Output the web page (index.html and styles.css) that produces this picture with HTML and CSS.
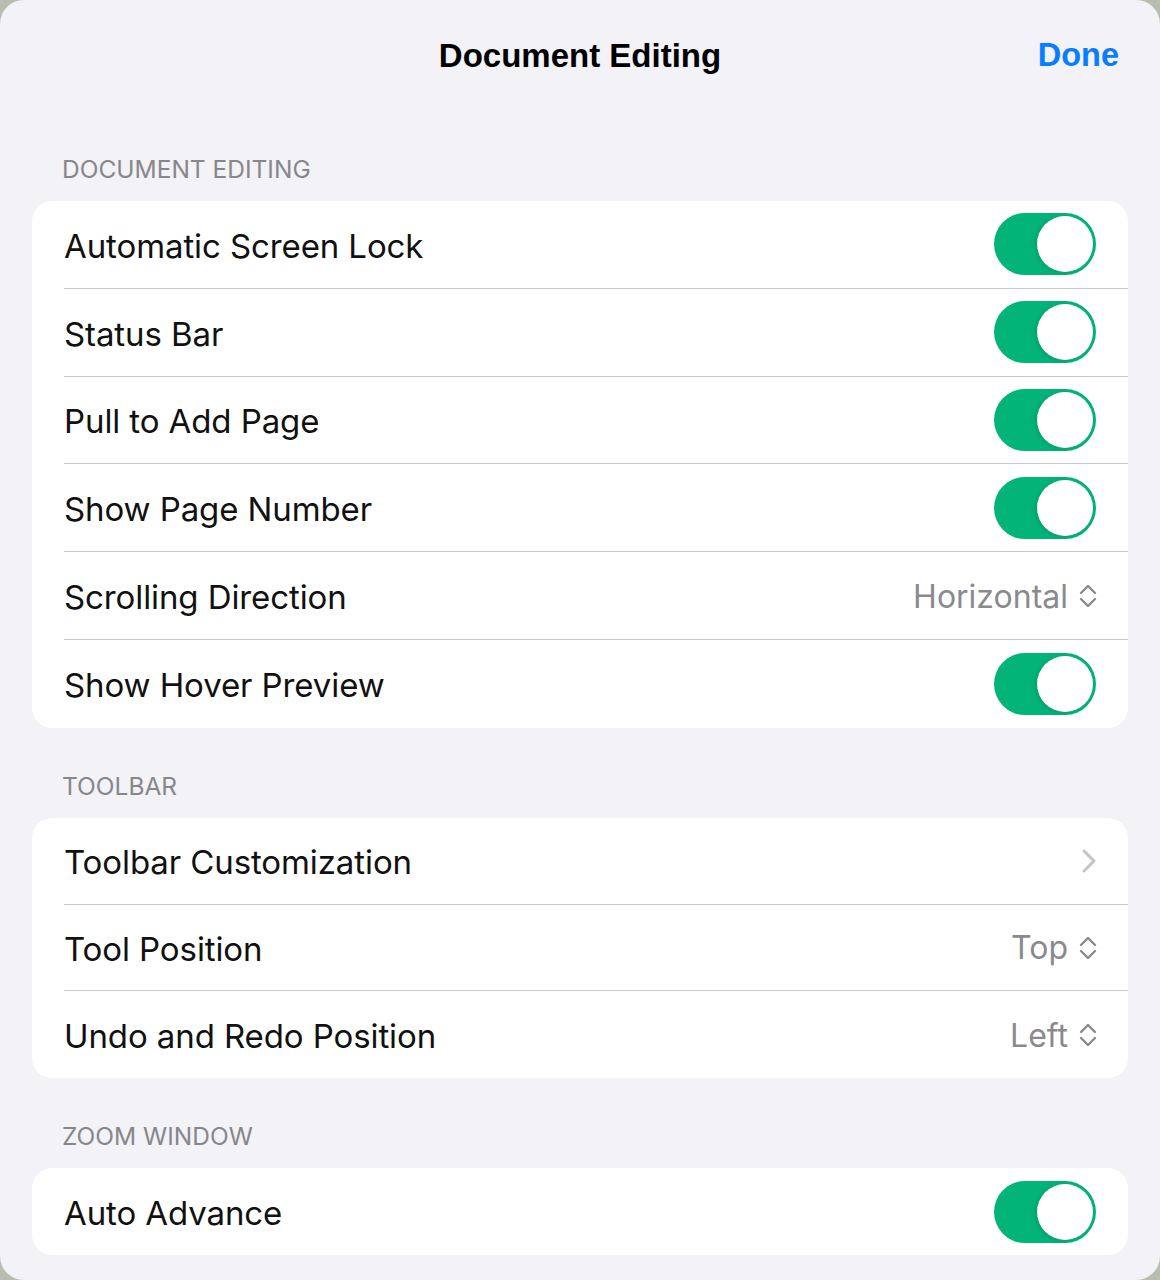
FILE: index.html
```html
<!DOCTYPE html>
<html lang="en">
<head>
<meta charset="utf-8">
<title>Document Editing</title>
<link rel="stylesheet" href="styles.css">
</head>
<body>
<div class="sheet">
  <header class="nav">
    <div class="nav-title">Document Editing</div>
    <div class="nav-done">Done</div>
  </header>

  <div class="section-title first">DOCUMENT EDITING</div>
  <div class="card">
    <div class="row"><span class="label">Automatic Screen Lock</span><span class="toggle"><span class="knob"></span></span></div>
    <div class="row"><span class="label">Status Bar</span><span class="toggle"><span class="knob"></span></span></div>
    <div class="row"><span class="label">Pull to Add Page</span><span class="toggle"><span class="knob"></span></span></div>
    <div class="row"><span class="label">Show Page Number</span><span class="toggle"><span class="knob"></span></span></div>
    <div class="row"><span class="label">Scrolling Direction</span>
      <span class="value">Horizontal<svg class="updown" viewBox="0 0 18 26" width="18" height="26"><path d="M2 10 L9 3 L16 10 M2 16 L9 23 L16 16" fill="none" stroke="#8a8a8e" stroke-width="2.4" stroke-linecap="round" stroke-linejoin="round"/></svg></span></div>
    <div class="row"><span class="label">Show Hover Preview</span><span class="toggle"><span class="knob"></span></span></div>
  </div>

  <div class="section-title">TOOLBAR</div>
  <div class="card compact">
    <div class="row"><span class="label">Toolbar Customization</span>
      <svg class="chev" viewBox="0 0 16 26" width="16" height="26"><path d="M3 3 L13 13 L3 23" fill="none" stroke="#c4c4c7" stroke-width="3" stroke-linecap="round" stroke-linejoin="round"/></svg></div>
    <div class="row"><span class="label">Tool Position</span>
      <span class="value">Top<svg class="updown" viewBox="0 0 18 26" width="18" height="26"><path d="M2 10 L9 3 L16 10 M2 16 L9 23 L16 16" fill="none" stroke="#8a8a8e" stroke-width="2.4" stroke-linecap="round" stroke-linejoin="round"/></svg></span></div>
    <div class="row"><span class="label">Undo and Redo Position</span>
      <span class="value">Left<svg class="updown" viewBox="0 0 18 26" width="18" height="26"><path d="M2 10 L9 3 L16 10 M2 16 L9 23 L16 16" fill="none" stroke="#8a8a8e" stroke-width="2.4" stroke-linecap="round" stroke-linejoin="round"/></svg></span></div>
  </div>

  <div class="section-title">ZOOM WINDOW</div>
  <div class="card compact">
    <div class="row"><span class="label">Auto Advance</span><span class="toggle"><span class="knob"></span></span></div>
  </div>
</div>
</body>
</html>
```

FILE: styles.css
```css
html, body {
  margin: 0;
  padding: 0;
  background: #b9bdb0;
}
body {
  width: 1160px;
  height: 1280px;
  overflow: hidden;
}
.sheet {
  width: 1160px;
  height: 1280px;
  box-sizing: border-box;
  background: #f2f2f7;
  border-radius: 24px;
  padding: 0 32px;
  font-family: "Inter", "Noto Sans", sans-serif;
  color: #111111;
}
.nav {
  height: 111px;
  display: flex;
  align-items: center;
  justify-content: center;
  position: relative;
}
.nav-title {
  font-family: "Liberation Sans", Arial, sans-serif;
  font-weight: 700;
  font-size: 33px;
  color: #000;
  margin-top: 1px;
}
.nav-done {
  position: absolute;
  right: 9px;
  top: 37px;
  font-family: "Liberation Sans", Arial, sans-serif;
  font-weight: 700;
  font-size: 32.5px;
  color: #0a7cff;
}
.section-title {
  font-size: 24.5px;
  line-height: 30px;
  color: #87878b;
  padding: 43px 0 17px 30px;
}
.card {
  background: #ffffff;
  border-radius: 20px;
  overflow: hidden;
}
.row {
  height: 87.8px;
  box-sizing: border-box;
  margin-left: 32px;
  padding-right: 32px;
  display: flex;
  align-items: center;
  justify-content: space-between;
  border-bottom: 1px solid #c8c8ca;
}
.compact .row {
  height: 86.8px;
}
.row:last-child {
  border-bottom: none;
}
.label {
  font-size: 33px;
  letter-spacing: -0.1px;
  margin-top: 3px;
}
.value {
  display: flex;
  align-items: center;
  gap: 11px;
  font-size: 32px;
  color: #8a8a8e;
  margin-right: -1px;
  margin-top: 1px;
}
.updown {
  display: block;
}
.chev {
  display: block;
  margin-right: -1px;
}
.toggle {
  width: 102px;
  height: 62px;
  border-radius: 31px;
  background: #03b479;
  position: relative;
  flex-shrink: 0;
}
.knob {
  position: absolute;
  right: 3px;
  top: 3px;
  width: 56px;
  height: 56px;
  border-radius: 50%;
  background: #ffffff;
  box-shadow: -2px 1px 5px rgba(0, 60, 30, 0.18);
}
```
